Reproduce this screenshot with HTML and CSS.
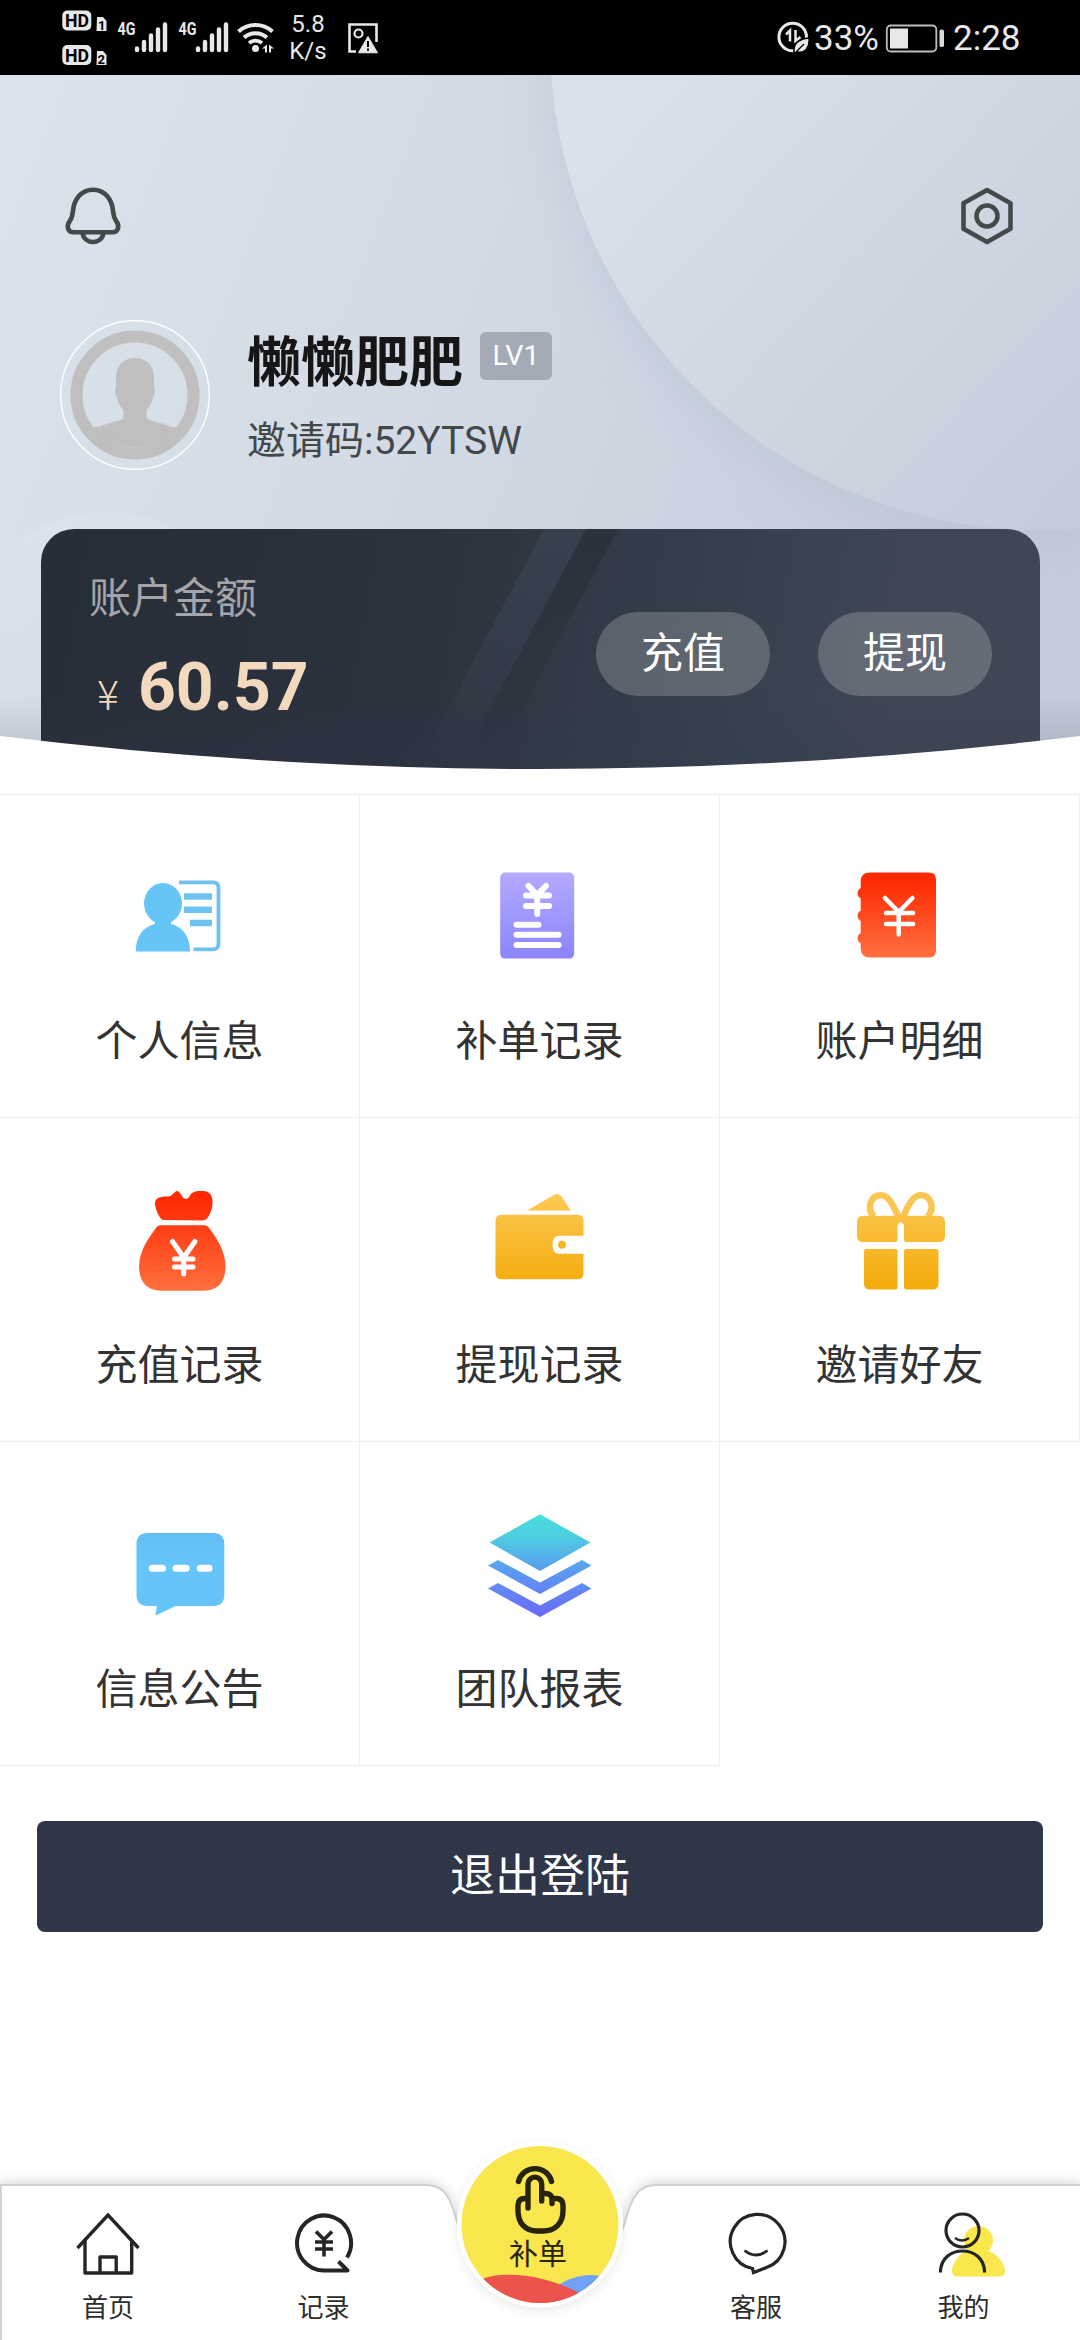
FILE: index.html
```html
<!DOCTYPE html>
<html lang="zh-CN">
<head>
<meta charset="utf-8">
<title>我的</title>
<link rel="stylesheet" href="styles.css">
</head>
<body>
<div class="page">
  <header class="status">
    <svg class="status-left" viewBox="60 0 216 75" width="216" height="75">
      <g fill="#e8e8e8">
        <rect x="62.300" y="10.500" width="29" height="20" rx="5"/>
        <rect x="62.300" y="45" width="29" height="20" rx="5"/>
        <path d="M97 17h6l3.500 4v10h-10zM97 51h6l3.500 4v10h-10z"/>
      </g>
      <g class="hd-text">
        <text x="65" y="27" textLength="24" lengthAdjust="spacingAndGlyphs">HD</text>
        <text x="65" y="61.500" textLength="24" lengthAdjust="spacingAndGlyphs">HD</text>
        <text class="sim" x="98" y="29.500">1</text>
        <text class="sim" x="97.500" y="63.500">2</text>
      </g>
      <g class="net-text">
        <text x="117.500" y="35" textLength="18" lengthAdjust="spacingAndGlyphs">4G</text>
        <text x="178.500" y="35" textLength="18" lengthAdjust="spacingAndGlyphs">4G</text>
      </g>
      <g stroke="#e8e8e8" stroke-width="4.400" stroke-linecap="round">
        <path d="M137 48.500v1.500M144 42v8M151 35.500v14.500M158 29.500v20.500M165 24.500v25.500"/>
        <path d="M198 48.500v1.500M205 42v8M212 35.500v14.500M219 29.500v20.500M226 24.500v25.500"/>
      </g>
      <g fill="none" stroke="#e8e8e8" stroke-width="4">
        <path d="M238.500 31.500a25.500 25.500 0 0 1 34 0M244 37.500a17.500 17.500 0 0 1 23 0M249 43a10.500 10.500 0 0 1 13 0"/>
      </g>
      <circle cx="255.500" cy="48.500" r="3.500" fill="#e8e8e8"/>
      <path d="M262 48.500l5-4v8h-2v-4zM269 44.500l5 4h-3v4h-2z" fill="#e8e8e8"/>
    </svg>
    <div class="speed">5.8<br>K/s</div>
    <svg class="photo" viewBox="343 22 32 32" width="32" height="32">
      <path d="M352 51.500h-6.500v-27h27V42" fill="none" stroke="#e8e8e8" stroke-width="2.600"/>
      <circle cx="354.500" cy="33.500" r="4" fill="none" stroke="#e8e8e8" stroke-width="2.200"/>
      <path d="M364 36.500l9.500 16.300h-19z" fill="#e8e8e8" stroke="#e8e8e8" stroke-linejoin="round"/>
      <path d="M364 41v6M364 48.500v2.200" stroke="#000" stroke-width="2"/>
    </svg>
    <svg class="saver" viewBox="777 21 33 33" width="33" height="33">
      <circle cx="792.700" cy="37" r="13.800" fill="none" stroke="#e8e8e8" stroke-width="3"/>
      <path d="M786 34.500l4-4v11M795.500 30v11l5-4" fill="none" stroke="#e8e8e8" stroke-width="2.500"/>
      <path d="M794 53c-1-9 4-14 15-15 1 10-4 15-11 14z" fill="#e8e8e8" stroke="#000" stroke-width="1.500"/>
      <path d="M796 52l8-8" stroke="#000" stroke-width="1.200"/>
    </svg>
    <span class="percent">33%</span>
    <svg class="battery" viewBox="885 22 60 30" width="60" height="30">
      <rect x="886.800" y="24.500" width="49.500" height="26" rx="4" fill="none" stroke="#bdbdbd" stroke-width="1.800"/>
      <rect x="890" y="27.500" width="18" height="20" fill="#e8e8e8"/>
      <rect x="939.500" y="28.500" width="4.500" height="17.500" rx="1.800" fill="#d8d8d8"/>
    </svg>
    <span class="clock">2:28</span>
  </header>

  <section class="hero">
    <svg class="hero-bg" viewBox="0 75 1080 719" width="1080" height="719">
      <defs>
        <linearGradient id="sky" gradientUnits="userSpaceOnUse" x1="0" y1="250" x2="960" y2="620"><stop offset="0" stop-color="#dae2eb"/><stop offset=".5" stop-color="#d1d9e4"/><stop offset="1" stop-color="#c5ccdb"/></linearGradient>
        <linearGradient id="disc" gradientUnits="userSpaceOnUse" x1="640" y1="90" x2="1080" y2="500"><stop offset="0" stop-color="#dae1ea"/><stop offset=".5" stop-color="#d0d7e1"/><stop offset="1" stop-color="#c6ccdb"/></linearGradient>
        <linearGradient id="small" x1="0" y1="0" x2="0" y2="1"><stop offset="0" stop-color="#fff" stop-opacity=".1"/><stop offset=".5" stop-color="#fff" stop-opacity="0"/></linearGradient>
        <filter id="haze" x="-20%" y="-20%" width="140%" height="140%"><feGaussianBlur stdDeviation="22"/></filter>
      </defs>
      <rect y="75" width="1080" height="719" fill="url(#sky)"/>
      <circle cx="1036" cy="58" r="492" fill="#b9c3d4" opacity=".5" filter="url(#haze)"/>
      <circle cx="1040" cy="40" r="490" fill="url(#disc)"/>
      <circle cx="107" cy="662" r="150" fill="url(#small)"/>
    </svg>
    <div class="tools">
      <svg viewBox="64 185 58 62" width="58" height="62" fill="none" stroke="#45494c" stroke-width="4.600" stroke-linejoin="round">
        <path d="M93 189.700c-12 0-19 10-20 21-.5 5-1 7-3 10-4 5-2.500 11.500 3.500 11.500h39c6 0 7.500-6.500 3.500-11.500-2-3-2.500-5-3-10-1-11-8-21-20-21zM82.500 233c2 12 19 12 21 0"/>
      </svg>
      <svg viewBox="958 185 58 62" width="58" height="62" fill="none" stroke="#45494c" stroke-width="4.600" stroke-linejoin="round">
        <path d="M987 190l23.500 13.300v25.400L987 242l-23.500-13.300v-25.400z"/><circle cx="987" cy="216" r="10.500"/>
      </svg>
    </div>
    <div class="profile">
      <svg class="avatar" viewBox="0 0 150 150" width="150" height="150">
        <circle cx="75" cy="75" r="74.300" fill="none" stroke="#fff" stroke-width="1.400"/>
        <circle cx="75" cy="75" r="58.500" fill="none" stroke="#bfbfbf" stroke-width="12"/>
        <path d="M75 38c12 0 19 8 19 20v9c1.500 3 1 8-1 10-1 6-3 9-6.500 13v8c4 4 21 5 29.500 12A60 60 0 0 1 34 110c8.500-7 25.500-8 29.500-12v-8C60 86 58 83 57 77c-2-2-2.500-7-1-10v-9c0-12 7-20 19-20z" fill="#bfbfbf"/>
        <path d="M34 109h82A60 60 0 0 1 34 109z" fill="#bfbfbf" stroke="#bfbfbf" stroke-width="4" stroke-linejoin="round"/>
      </svg>
      <div class="who">
        <div class="name-line"><span class="name">懒懒肥肥</span><span class="level">LV1</span></div>
        <div class="invite">邀请码:52YTSW</div>
      </div>
    </div>
    <div class="wallet">
      <svg class="wallet-bg" viewBox="41 529 999 242" width="999" height="242">
        <defs>
          <linearGradient id="beam" x1="0" y1="0" x2="0" y2="1"><stop offset="0" stop-color="#37424e"/><stop offset="1" stop-color="#37424e" stop-opacity="0"/></linearGradient>
          <linearGradient id="dark" x1="0" y1="0" x2="0" y2="1"><stop offset="0" stop-color="#2b303b" stop-opacity=".9"/><stop offset="1" stop-color="#2b303b" stop-opacity="0"/></linearGradient>
        </defs>
        <path d="M544 529h42L457 771h-42z" fill="url(#beam)"/>
        <path d="M586 529h32L489 771h-32z" fill="url(#dark)"/>
      </svg>
      <div class="balance">
        <div class="balance-label">账户金额</div>
        <div class="amount"><span class="yen">¥</span>60.57</div>
      </div>
      <div class="actions"><span class="pill">充值</span><span class="pill">提现</span></div>
    </div>
    <svg class="curve" viewBox="0 694 1080 100" width="1080" height="100">
      <defs><linearGradient id="shade" x1="0" y1="0" x2="0" y2="1"><stop offset="0" stop-color="#30384e" stop-opacity="0"/><stop offset="1" stop-color="#30384e" stop-opacity=".28"/></linearGradient></defs>
      <path d="M0 694Q540 728 1080 694V794H0z" fill="url(#shade)"/>
      <path d="M0 736Q540 802 1080 736V794H0z" fill="#fff"/>
    </svg>
  </section>

  <main class="grid">
    <div class="cell">
      <svg viewBox="120 857 120 120" width="120" height="120" fill="#66c5f7">
        <ellipse cx="163" cy="903.500" rx="19" ry="20.500"/>
        <path d="M155 920h16v4c13 3 19 14 19 27.500h-54.200c0-13.500 6-24.500 19.200-27.500z"/>
        <path d="M179 882.300h34q5.500 0 5.500 5.500v56q0 5.500-5.500 5.500h-19.500" fill="none" stroke="#6fc1ee" stroke-width="3.800"/>
        <path d="M184 893.300h28v6.500h-28zM184 906.600h28v6.500h-28zM190 919.800h22v6.500h-22z" fill="#6fc3f2"/>
      </svg>
      <span>个人信息</span>
    </div>
    <div class="cell">
      <svg viewBox="480 857 120 120" width="120" height="120">
        <defs><linearGradient id="vio" x1="0" y1="0" x2="0" y2="1"><stop offset="0" stop-color="#b3abfd"/><stop offset="1" stop-color="#8b84fd"/></linearGradient></defs>
        <rect x="500.200" y="872.600" width="74" height="86" rx="5" fill="url(#vio)"/>
        <path d="M528.500 886l8.700 9 8.700-9M526 895.500h23M526 906h23M537.200 896v18M516.500 924.700h22M516.500 934.800h42M516.500 944.900h42" fill="none" stroke="#fff" stroke-width="6" stroke-linecap="round" stroke-linejoin="round"/>
      </svg>
      <span>补单记录</span>
    </div>
    <div class="cell">
      <svg viewBox="840 857 120 120" width="120" height="120">
        <defs><linearGradient id="red" x1="0" y1="0" x2="0" y2="1"><stop offset=".1" stop-color="#ff2a02"/><stop offset="1" stop-color="#ff7040"/></linearGradient></defs>
        <path d="M870 872.400h59q7 0 7 7v71q0 7-7 7h-59q-9.300 0-9.300-9v-5a6 6 0 0 1 0-10.500v-12a6 6 0 0 1 0-10.500v-12a6 6 0 0 1 0-10.500v-6.500q0-9 9.300-9z" fill="url(#red)"/>
        <path d="M885 898l13.700 14 13.700-14M886 913h27M886 924h27M898.700 912v22.500" fill="none" stroke="#fff" stroke-width="4.500" stroke-linecap="round" stroke-linejoin="round"/>
      </svg>
      <span>账户明细</span>
    </div>
    <div class="cell">
      <svg viewBox="120 1181 120 120" width="120" height="120">
        <defs><linearGradient id="bag" gradientUnits="userSpaceOnUse" x1="0" y1="1200" x2="0" y2="1290"><stop offset="0" stop-color="#ff2a02"/><stop offset="1" stop-color="#ff6f3e"/></linearGradient></defs>
        <path d="M164 1220q-3 0-5-4-4-8-4-12.500c0-6 5-7 13-7q3 0 6-3.500c4-5 6 0 8 3 2 4 6 4 8-.5 3-5 9-4.500 13-4.500 7 0 9 5 9.500 9.500q.5 8-4 16-2.500 4-5.500 4z" fill="url(#bag)"/>
        <path d="M161 1225.300h43q4 0 6 4c6 8 15.500 22 15.500 36.700q0 24.700-23 24.700h-40q-23.400 0-23.400-24.700c0-14.700 10-28.700 16-36.700q2-4 5.900-4z" fill="url(#bag)"/>
        <path d="M172.500 1241.500l11.200 16 11.200-16M174.500 1259h18.500M174.500 1267h18.500M183.700 1257v17" fill="none" stroke="#fff" stroke-width="5" stroke-linecap="round" stroke-linejoin="round"/>
      </svg>
      <span>充值记录</span>
    </div>
    <div class="cell">
      <svg viewBox="480 1181 120 120" width="120" height="120">
        <defs><linearGradient id="gold" gradientUnits="userSpaceOnUse" x1="0" y1="1192" x2="0" y2="1285"><stop offset="0" stop-color="#ffcb52"/><stop offset=".3" stop-color="#fac040"/><stop offset="1" stop-color="#f4ac0c"/></linearGradient></defs>
        <path d="M527 1210.500l27-15.500q4.500-3 8 2l8.500 13.500z" fill="url(#gold)"/>
        <path d="M502 1214.700h75.500q6 0 6 6v15h-24q-7 0-7 9t7 9h24v19.500q0 6-6 6H502q-6.500 0-6.500-6v-52.500q0-6 6.500-6z" fill="url(#gold)"/>
        <circle cx="562" cy="1244.700" r="4" fill="#f7b626"/>
      </svg>
      <span>提现记录</span>
    </div>
    <div class="cell">
      <svg viewBox="840 1181 120 120" width="120" height="120">
        <path d="M899 1218C893.500 1206 889 1195.300 881 1195.300C870.500 1195.300 866 1208 874 1216.500M902.500 1218C908 1206 912.500 1195.300 920.500 1195.300C931 1195.300 935.500 1208 927.500 1216.500" fill="none" stroke="#f9c653" stroke-width="6.500"/>
        <path d="M863 1215.700H938.500q6.500 0 6.500 6v14q0 6.300-6.500 6.300H906.500q-2.500 0-2.500-2.500V1225q-3.200-5.500-6.500 0v14.500q0 2.500-2.500 2.500H863.500q-6.500 0-6.500-6.300v-14q0-6 6-6zM866 1249h29q2.500 0 2.500 2.500v35.500q0 2.500-2.500 2.500h-25q-6 0-6-6v-32q0-2.500 2-2.500zM906.500 1249H936q2.500 0 2.500 2.500v32q0 6-6 6h-26q-2.500 0-2.500-2.500v-35.500q0-2.500 2.500-2.500z" fill="url(#gold)"/>
      </svg>
      <span>邀请好友</span>
    </div>
    <div class="cell">
      <svg viewBox="120 1504 120 120" width="120" height="120">
        <defs><linearGradient id="sky2" x1="0" y1="0" x2="0" y2="1"><stop offset="0" stop-color="#63bcf6"/><stop offset=".3" stop-color="#66c5f8"/></linearGradient></defs>
        <path d="M148 1532h65q11.300 0 11.300 11v51q0 11-11.300 11h-37.500L157 1614q-2 1-1.500-1l1.500-8h-9q-11.500 0-11.500-11v-51q0-11 11.500-11z" fill="url(#sky2)"/>
        <path d="M152.300 1567.300h10.200M176 1567.300h10.200M200.300 1567.300h8.700" stroke="#fff" stroke-width="7" stroke-linecap="round"/>
      </svg>
      <span>信息公告</span>
    </div>
    <div class="cell">
      <svg viewBox="480 1504 120 120" width="120" height="120">
        <defs><linearGradient id="stack" gradientUnits="userSpaceOnUse" x1="0" y1="1513" x2="0" y2="1616"><stop offset="0" stop-color="#47dedc"/><stop offset=".2" stop-color="#4dd0e1"/><stop offset=".55" stop-color="#5b9bef"/><stop offset="1" stop-color="#6b68fa"/></linearGradient></defs>
        <path d="M540 1513.300l50.500 28.200L540 1570l-50.500-28.500zM498 1559l42 22.500 42-22.500 9.500 5.500L540 1593l-52-28.500zM498 1582l42 22.500 42-22.500 9.500 5.500L540 1616l-52-28.500z" fill="url(#stack)"/>
      </svg>
      <span>团队报表</span>
    </div>
  </main>

  <div class="logout">退出登陆</div>

  <nav class="tabs">
    <svg class="tabs-bg" viewBox="0 2130 1080 210" width="1080" height="210">
      <defs>
        <filter id="lift" x="-5%" y="-20%" width="110%" height="140%"><feGaussianBlur stdDeviation="7"/></filter>
        <clipPath id="ball"><circle cx="540" cy="2224.500" r="78.500"/></clipPath>
      </defs>
      <path d="M0 2184H426C443 2184 450 2195 457 2222L476 2290H604L625 2222C632 2195 640 2184 656 2184H1080V2350H0z" fill="#000" opacity=".2" filter="url(#lift)"/>
      <path d="M1 2350V2185H426C443 2185 450 2195 457 2222L476 2290H604L625 2222C632 2195 640 2185 656 2185H1090V2350z" fill="#fff" stroke="#d0d0d0" stroke-width="1.800"/>
      <path d="M450 2240h180v110H450z" fill="#fff"/>
      <circle cx="540" cy="2228" r="80" fill="#000" opacity=".12" filter="url(#lift)"/>
      <circle cx="540" cy="2224.500" r="83" fill="#fff"/>
      <g clip-path="url(#ball)">
        <path d="M450 2130h180v180H450z" fill="#fae64d"/>
        <path d="M560 2284c10-6 25-11 40-8v30h-50z" fill="#71a2f8"/>
        <path d="M480 2280c20-10 65-6 99 13l-20 20h-79z" fill="#ec534d"/>
      </g>
      <g fill="none" stroke="#27230e" stroke-width="5.400" stroke-linecap="round" stroke-linejoin="round">
        <path d="M518.500 2181.500a17 17 0 0 1 33 0"/>
        <path d="M528 2208V2184a6.800 6.800 0 0 1 13.700 0v17M542 2193.500h3q7 0 7 6v4M552 2198.500h4q7 0 7 7v5c0 13-8 20.500-20 20.500h-6c-12 0-19-8-19-20.500v-5q0-6.500 6-7h4"/>
      </g>
    </svg>
    <div class="tab">
      <svg viewBox="74 2211 68 68" width="68" height="68" fill="none" stroke="#252525" stroke-width="3.400"><path d="M77.500 2248L108 2215l30.500 33"/><path d="M85 2240v33h46.700v-33M100 2272v-15h16.200v15" stroke-linejoin="round"/></svg>
      <span>首页</span>
    </div>
    <div class="tab record">
      <svg viewBox="290 2211 68 68" width="68" height="68" fill="none" stroke="#252525" stroke-width="4" stroke-linejoin="round"><path d="M347 2257.500A27 27.500 0 1 0 324 2270.500H347.500L338.500 2261.500"/><path d="M316 2231.500l8 8 8-8M315 2242h18M315 2249h18M324 2240v16.500" stroke-width="3.600"/></svg>
      <span>记录</span>
    </div>
    <div class="tab main-tab"><span>补单</span></div>
    <div class="tab">
      <svg viewBox="722 2211 68 68" width="68" height="68" fill="none" stroke="#252525" stroke-width="3.200"><path d="M752.500 2268.500a27.300 27.300 0 1 1 14-1l-13 5z"/><path d="M744.500 2250.500q11.500 9 23 0" stroke-width="2.800"/></svg>
      <span>客服</span>
    </div>
    <div class="tab">
      <svg viewBox="929.500 2211 78 68" width="78" height="68" class="me" fill="none" stroke="#252525" stroke-width="3.200"><path d="M968 2250a14.500 14.500 0 1 1 21 1c9 3 16.500 13 16.500 20q0 5.500-5.500 5.500h-42q-5.500 0-5.500-5.500c0-8 8-18 15.500-21z" fill="#fae64d" stroke="none"/><circle cx="963" cy="2230.500" r="16.500"/><path d="M941 2272.500v-2c1-12 10-19.500 22-19.500s21 7.500 22 19.500v2"/><path d="M955.500 2238q7 5 14 0" stroke-width="2.400"/></svg>
      <span>我的</span>
    </div>
  </nav>
</div>
</body>
</html>
```

FILE: styles.css
```css
* { box-sizing: border-box; }

body {
  margin: 0;
  background: #fff;
  color: #333;
  font-family: Roboto, "Noto Sans CJK SC", sans-serif;
}

svg { display: block; flex: none; }

.page {
  width: 1080px;
  height: 2340px;
  display: flex;
  flex-direction: column;
  overflow: hidden;
}

/* system status bar */
.status {
  height: 75px;
  flex: none;
  display: flex;
  align-items: center;
  padding: 0 60px;
  background: #000;
  color: #e8e8e8;
}
.hd-text { font: 700 18px Roboto, sans-serif; fill: #000; }
.hd-text .sim { font-size: 13px; }
.net-text { font: 700 18px Roboto, sans-serif; fill: #e8e8e8; }
.speed { width: 64px; padding-top: 1px; font-size: 24px; line-height: 27px; text-align: center; }
.photo { margin-left: 7px; }
.saver { margin-left: auto; }
.percent { width: 71px; margin-left: 4px; padding-top: 2px; font-size: 35px; line-height: 75px; }
.battery { margin-right: 8px; }
.clock { width: 67px; padding-top: 2px; font-size: 35px; line-height: 75px; white-space: nowrap; }

/* profile header */
.hero {
  position: relative;
  height: 719px;
  flex: none;
  padding: 110px 40px 0 41px;
}
.hero-bg { position: absolute; left: 0; top: 0; }
.curve { position: absolute; left: 0; bottom: 0; }
.tools {
  position: relative;
  display: flex;
  justify-content: space-between;
  padding: 0 24px 0 23px;
}
.profile {
  position: relative;
  display: flex;
  margin-top: 72.500px;
  padding-left: 19px;
}
.who { padding-left: 37px; }
.name-line { display: flex; align-items: flex-start; height: 84px; }
.name {
  padding-top: 2px;
  font-size: 54px;
  font-weight: 700;
  line-height: 84px;
  color: #161616;
}
.level {
  width: 72px;
  height: 48px;
  margin: 12px 0 0 17px;
  border-radius: 6px;
  background: #a4abb6;
  color: #fff;
  font-size: 28.500px;
  line-height: 47px;
  text-align: center;
}
.invite { font-size: 39px; line-height: 60px; margin-top: 7px; color: #444749; }

.wallet {
  position: relative;
  display: flex;
  justify-content: space-between;
  height: 242px;
  margin-top: 58.500px;
  padding: 0 48px 0 48px;
  border-radius: 33px 33px 0 0;
  overflow: hidden;
  background: linear-gradient(100deg, #282e38 5%, #2c323e 38%, #333d49 60%, #3f4756 85%);
}
.wallet-bg { position: absolute; left: 0; top: 0; }
.balance { position: relative; }
.balance-label { margin-top: 40px; font-size: 42px; line-height: 60px; color: #a3a5aa; }
.amount {
  display: flex;
  align-items: baseline;
  gap: 15px;
  padding-left: 4px;
  font-size: 66px;
  font-weight: 700;
  line-height: 90px;
  margin-top: 14px;
  color: #f3d9be;
}
.yen { width: 30px; font: 300 41px "Noto Sans CJK SC", sans-serif; text-align: center; line-height: 60px; }
.actions { position: relative; display: flex; gap: 48px; padding-top: 83px; }
.pill {
  width: 174px;
  height: 84px;
  border-radius: 42px;
  background: rgba(255, 255, 255, .2);
  color: #fff;
  font-size: 42px;
  line-height: 83px;
  text-align: center;
}

/* feature menu */
.grid {
  display: grid;
  grid-template-columns: repeat(3, 360px);
  grid-auto-rows: 324px;
  flex: none;
  height: 972px;
  background: linear-gradient(#eee, #eee) top / 100% 1px no-repeat;
}
.cell {
  display: flex;
  flex-direction: column;
  align-items: center;
  padding-top: 63px;
  border-right: 1px solid #eee;
  border-bottom: 1px solid #eee;
}
.cell span { margin-top: 34px; font-size: 42px; line-height: 62px; color: #333; }

.logout {
  flex: none;
  height: 111px;
  margin: 55px 37px 0;
  border-radius: 8px;
  background: #2e3648;
  color: #fff;
  font-size: 45px;
  line-height: 111px;
  text-align: center;
}

/* bottom navigation */
.tabs {
  position: relative;
  display: grid;
  grid-template-columns: 216px 216px 216px 216px 199px;
  height: 210px;
  flex: none;
  margin-top: auto;
}
.tabs-bg { position: absolute; left: 0; top: 0; }
.tab {
  position: relative;
  display: flex;
  flex-direction: column;
  align-items: center;
  padding-top: 81px;
  font-size: 26px;
  color: #2d2d2d;
}
.tab span { line-height: 36px; margin-top: 11px; }
.record { padding-right: 1px; }
.main-tab { padding: 107px 4px 0 0; font-size: 29px; color: #27230e; }
.main-tab span { margin-top: 0; }
.me { margin-left: 9px; }
```
